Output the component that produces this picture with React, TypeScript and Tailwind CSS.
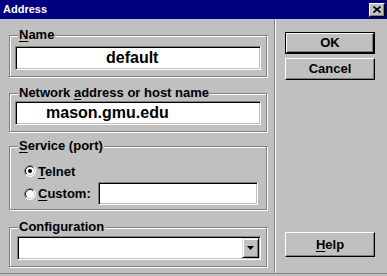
import React from "react";

const groupCls =
  "relative w-[258px] border border-[#808080] shadow-[inset_1px_1px_0_#fff,1px_1px_0_#fff]";
const sunkenCls =
  "bg-white border border-t-[#808080] border-l-[#808080] border-b-white border-r-white shadow-[inset_1px_1px_0_#000,inset_-1px_-1px_0_#c0c0c0]";
const raisedCls =
  "flex items-center justify-center border border-t-white border-l-white border-b-black border-r-black shadow-[inset_-1px_-1px_0_#808080]";

const Group: React.FC<{ label: React.ReactNode; className: string; children: React.ReactNode }> = ({
  label,
  className,
  children,
}) => (
  <div className={`${groupCls} ${className}`}>
    <span className="absolute left-[8px] top-[-8px] bg-[#c0c0c0] px-[1px] leading-[14px]">{label}</span>
    {children}
  </div>
);

const Radio: React.FC<{ checked?: boolean }> = ({ checked }) => (
  <svg width="12" height="12" viewBox="0 0 12 12" className="shrink-0">
    <circle cx="6" cy="6" r="5.5" fill="#fff" />
    <path d="M2.1 9.9 A5.5 5.5 0 0 1 9.9 2.1" stroke="#808080" fill="none" />
    <path d="M2.8 9.2 A4.5 4.5 0 0 1 9.2 2.8" stroke="#000" fill="none" />
    <path d="M9.9 2.1 A5.5 5.5 0 0 1 2.1 9.9" stroke="#fff" fill="none" />
    <path d="M9.2 2.8 A4.5 4.5 0 0 1 2.8 9.2" stroke="#c0c0c0" fill="none" />
    {checked && <circle cx="6" cy="6" r="2" fill="#000" />}
  </svg>
);

const U: React.FC<{ children: React.ReactNode }> = ({ children }) => (
  <span className="underline decoration-1 underline-offset-[2px]">{children}</span>
);

export default function App() {
  return (
    <div className="flex h-[276px] w-[387px] flex-col bg-[#c0c0c0] font-['Liberation_Sans',Arial,sans-serif] text-[13px] font-bold text-black">
      {/* title bar */}
      <div className="flex h-[19px] items-center bg-[#000080] pl-[3px] pr-[2px]">
        <span className="text-[11px] leading-none text-white">Address</span>
        <div className={`${raisedCls} ml-auto h-[14px] w-[16px] bg-[#c0c0c0]`}>
          <svg width="8" height="7" viewBox="0 0 8 7">
            <path d="M0.5 0.5 L7.5 6.5 M7.5 0.5 L0.5 6.5" stroke="#000" strokeWidth="1.6" />
          </svg>
        </div>
      </div>

      <div className="flex h-[254px]">
        {/* left side */}
        <div className="flex w-[274px] flex-col pl-[9px]">
          <Group label={<><U>N</U>ame</>} className="mt-[16px] px-[5px] pb-[6px] pt-[10px]">
            <div className={`${sunkenCls} flex h-[24px] items-center pl-[90px] text-[16px]`}>default</div>
          </Group>

          <Group
            label={<>Network <U>a</U>ddress or host name</>}
            className="mt-[16px] px-[5px] pb-[6px] pt-[7px]"
          >
            <div className={`${sunkenCls} flex h-[24px] items-center pl-[30px] text-[16px]`}>mason.gmu.edu</div>
          </Group>

          <Group label={<><U>S</U>ervice (port)</>} className="mt-[14px] pb-[4px] pl-[14px] pt-[16px]">
            <div className="flex h-[16px] items-center gap-[2px]">
              <Radio checked />
              <span className="leading-none">
                <U>T</U>elnet
              </span>
            </div>
            <div className="mt-[3px] flex h-[23px] items-center">
              <div className="flex w-[74px] items-center gap-[2px]">
                <Radio />
                <span className="leading-none">
                  <U>C</U>ustom:
                </span>
              </div>
              <div className={`${sunkenCls} h-[23px] w-[160px]`} />
            </div>
          </Group>

          <Group label="Configuration" className="mt-[17px] pb-[6px] pl-[7px] pt-[8px]">
            <div className={`${sunkenCls} flex h-[24px] w-[244px] justify-end p-[1px]`}>
              <div className="flex h-[20px] w-[17px] items-center justify-center border border-t-[#dfdfdf] border-l-[#dfdfdf] border-b-black border-r-black bg-[#c0c0c0] shadow-[inset_1px_1px_0_#fff,inset_-1px_-1px_0_#808080]">
                <svg width="7" height="4" viewBox="0 0 7 4">
                  <path d="M0 0 H7 L3.5 4 Z" fill="#000" />
                </svg>
              </div>
            </div>
          </Group>
        </div>

        {/* separator */}
        <div className="w-px bg-[#808080]" />
        <div className="w-px bg-white" />

        {/* buttons */}
        <div className="flex flex-1 flex-col pl-[9px]">
          <div className="mt-[13px] h-[22px] w-[90px] border border-black">
            <div className={`${raisedCls} h-full w-full`}>OK</div>
          </div>
          <div className={`${raisedCls} mt-[4px] h-[22px] w-[90px]`}>Cancel</div>
          <div className={`${raisedCls} mb-[16px] mt-auto h-[25px] w-[90px]`}>
            <span>
              <U>H</U>elp
            </span>
          </div>
        </div>
      </div>

      <div className="h-px bg-[#808080]" />
      <div className="h-[2px]" />
    </div>
  );
}
